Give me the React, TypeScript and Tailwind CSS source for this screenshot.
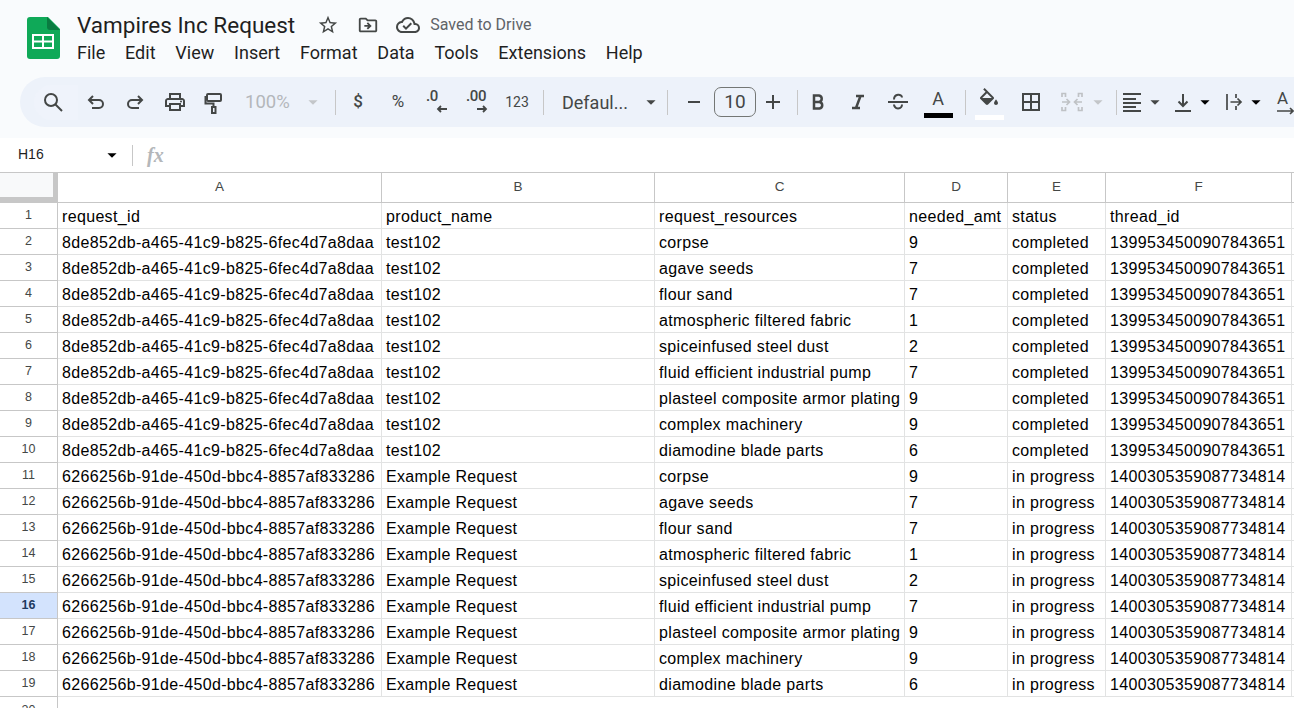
import type { ReactNode } from "react";
import {
  MdOutlinePrint,
  MdBorderAll,
  MdArrowDropDown,
  MdStarBorder,
  MdOutlineDriveFileMove,
  MdOutlineCloudDone,
} from "react-icons/md";

const columns = ["A", "B", "C", "D", "E", "F"];

const resources: [string, string][] = [
  ["corpse", "9"],
  ["agave seeds", "7"],
  ["flour sand", "7"],
  ["atmospheric filtered fabric", "1"],
  ["spiceinfused steel dust", "2"],
  ["fluid efficient industrial pump", "7"],
  ["plasteel composite armor plating", "9"],
  ["complex machinery", "9"],
  ["diamodine blade parts", "6"],
];

const rows: string[][] = [
  ["request_id", "product_name", "request_resources", "needed_amt", "status", "thread_id"],
  ...resources.map(([name, amt]) => [
    "8de852db-a465-41c9-b825-6fec4d7a8daa",
    "test102",
    name,
    amt,
    "completed",
    "1399534500907843651",
  ]),
  ...resources.map(([name, amt]) => [
    "6266256b-91de-450d-bbc4-8857af833286",
    "Example Request",
    name,
    amt,
    "in progress",
    "1400305359087734814",
  ]),
];

const Divider = ({ className }: { className: string }) => (
  <div className={`h-[25px] w-px shrink-0 bg-[#c7c7c7] ${className}`} />
);

const Drop = ({ className = "text-[#444746]" }: { className?: string }) => (
  <MdArrowDropDown className={`size-[22px] shrink-0 ${className}`} />
);

const Btn = ({ className = "w-[40px]", children }: { className?: string; children: ReactNode }) => (
  <div className={`flex h-[28px] shrink-0 items-center justify-center text-[#444746] ${className}`}>{children}</div>
);

// stroked 24px toolbar glyph
const Glyph = ({ children, stroke = "#444746", sw = 2 }: { children: ReactNode; stroke?: string; sw?: number }) => (
  <svg width="24" height="24" viewBox="0 0 24 24" fill="none" stroke={stroke} strokeWidth={sw} className="shrink-0">
    {children}
  </svg>
);

const SheetsLogo = () => (
  <svg width="33" height="42" viewBox="0 0 33 42" className="shrink-0">
    <path d="M3 0h18l12 12v27a3 3 0 0 1-3 3H3a3 3 0 0 1-3-3V3a3 3 0 0 1 3-3z" fill="#0fa958" />
    <path d="M20 0l13 13h-10a3 3 0 0 1-3-3z" fill="#0a7c41" />
    <path d="M5 17h22v15H5z" fill="#fff" />
    <path d="M7 19h8v4.500H7zM17 19h8v4.500h-8zM7 25.500h8V30H7zM17 25.500h8V30h-8z" fill="#0fa958" />
  </svg>
);

const DecimalIcon = ({ label, dir }: { label: string; dir: "left" | "right" }) => (
  <div className={dir === "left" ? "relative flex h-[30px] w-[40px] shrink-0 justify-center pr-[8px] text-[#444746]" : "relative flex h-[30px] w-[40px] shrink-0 justify-center text-[#444746]"}>
    <span className="font-['Roboto',sans-serif] text-[15px] leading-[18px] font-medium tracking-tight">{label}</span>
    <svg width="12" height="10" viewBox="0 0 12 10" className="absolute top-[17px] left-[20px]">
      {dir === "left" ? (
        <path d="M11 5H2M5 2 2 5l3 3" fill="none" stroke="currentColor" strokeWidth="1.800" />
      ) : (
        <path d="M1 5h9M7 2l3 3-3 3" fill="none" stroke="currentColor" strokeWidth="1.800" />
      )}
    </svg>
  </div>
);

export default function App() {
  return (
    <div className="flex h-[708px] w-[1294px] flex-col overflow-hidden bg-[#f9fbfd] font-['Liberation_Sans',Arial,sans-serif] text-black">
      {/* title + menus */}
      <header className="flex h-[77px] shrink-0 items-start pt-[17px] pl-[27px]">
        <SheetsLogo />
        <div className="-mt-[7px] ml-[17px] flex flex-col font-['Roboto',sans-serif]">
          <div className="flex h-[30px] items-center">
            <span className="text-[22.500px] leading-[30px] text-[#1f1f1f]">Vampires Inc Request</span>
            <MdStarBorder className="ml-[22px] size-[22px] text-[#444746]" />
            <MdOutlineDriveFileMove className="ml-[18px] size-[22px] text-[#444746]" />
            <MdOutlineCloudDone className="ml-[17px] size-[24px] text-[#444746]" />
            <span className="ml-[10px] text-[16px] text-[#5f6368]">Saved to Drive</span>
          </div>
          <nav className="mt-[1px] flex gap-[19.800px] text-[18px] leading-[24px] text-[#1f1f1f]">
            <span>File</span>
            <span>Edit</span>
            <span>View</span>
            <span>Insert</span>
            <span>Format</span>
            <span>Data</span>
            <span>Tools</span>
            <span>Extensions</span>
            <span>Help</span>
          </nav>
        </div>
      </header>

      {/* toolbar */}
      <div className="ml-[20px] flex h-[50px] w-[1300px] shrink-0 items-center rounded-l-[25px] bg-[#edf2fa] pl-[14px]">
        <div className="flex h-[35px] w-[44px] shrink-0 items-center justify-center rounded-l-[17px] bg-[#eff3fb] pr-[7px]">
          <Glyph>
            <circle cx="10" cy="10" r="6" />
            <path d="M14.500 14.500 21 21" />
          </Glyph>
        </div>
        <Btn className="w-[36px]">
          <Glyph>
            <path d="M5 10h10a4 4 0 0 1 0 8H8M9 6l-4 4 4 4" />
          </Glyph>
        </Btn>
        <Btn className="w-[42px]">
          <Glyph>
            <path d="M19 10H9a4 4 0 0 0 0 8h7M15 6l4 4-4 4" />
          </Glyph>
        </Btn>
        <Btn className="w-[37px]"><MdOutlinePrint className="size-[24px]" /></Btn>
        <Btn className="w-[41px]">
          <Glyph>
            <rect x="5" y="4" width="14" height="7" rx="1" />
            <path d="M5 7H3.500v6.500H11.500V17" />
            <rect x="10" y="17" width="3.500" height="6" />
          </Glyph>
        </Btn>
        <span className="ml-[11px] w-[57px] shrink-0 pt-[1px] font-['Roboto',sans-serif] text-[18.500px] text-[#b4b7ba]">100%</span>
        <Drop className="text-[#c3c6c9]" />
        <Divider className="ml-[11px]" />
        <Btn className="w-[44px]"><span className="font-['Roboto',sans-serif] text-[17px] font-medium">$</span></Btn>
        <Btn className="w-[36px]"><span className="font-['Roboto',sans-serif] text-[17px]">%</span></Btn>
        <DecimalIcon label=".0" dir="left" />
        <DecimalIcon label=".00" dir="right" />
        <Btn className="w-[42px]"><span className="font-['Roboto',sans-serif] text-[14px]">123</span></Btn>
        <Divider className="ml-[5px]" />
        <span className="ml-[18px] w-[78px] shrink-0 font-['Roboto',sans-serif] text-[18px] text-[#444746]">Defaul...</span>
        <Drop />
        <Divider className="ml-[5px]" />
        <Btn className="w-[46px] pl-[6px]">
          <Glyph><path d="M6 12h12" /></Glyph>
        </Btn>
        <div className="flex h-[30px] w-[42px] shrink-0 items-center justify-center rounded-[7px] border border-[#747775] font-['Roboto',sans-serif] text-[19px] text-[#444746]">10</div>
        <Btn className="w-[34px]">
          <Glyph><path d="M5 12h14M12 5v14" /></Glyph>
        </Btn>
        <Divider className="ml-[7px]" />
        <Btn>
          <Glyph sw={2.500}>
            <path d="M8 12h5a3.300 3.300 0 0 0 0-6.500H8v13h5.500a3.300 3.300 0 0 0 0-6.500" />
          </Glyph>
        </Btn>
        <Btn>
          <Glyph sw={2.500}>
            <path d="M10 6h8M6 18h8M14.500 6 10 18" />
          </Glyph>
        </Btn>
        <Btn>
          <Glyph>
            <path d="M2 12h20M8 9.500c0-6 8-6 8-2M8 14.500c0 1 1 4 4 4s4-2.500 4-4" />
          </Glyph>
        </Btn>
        <div className="relative flex h-[34px] w-[40px] shrink-0 justify-center pt-[2px] text-[#444746]">
          <span className="font-['Roboto',sans-serif] text-[18px] leading-[24px]">A</span>
          <div className="absolute bottom-[1px] left-[6px] h-[5px] w-[29px] bg-black" />
        </div>
        <Divider className="ml-[7px]" />
        <div className="relative h-[40px] w-[44px] shrink-0 pt-[6px] pl-[11px] text-[#444746]">
          <svg width="24" height="24" viewBox="0 0 24 24" fill="currentColor">
            <path d="M16.560 8.940 7.620 0 6.210 1.410l2.380 2.380-5.150 5.150c-.59.59-.59 1.540 0 2.120l5.500 5.500c.29.29.68.44 1.060.44s.77-.15 1.060-.44l5.500-5.500c.59-.58.59-1.530 0-2.120zM5.210 10 10 5.210 14.790 10H5.210zM19 11.500s-2 2.170-2 3.500c0 1.100.9 2 2 2s2-.9 2-2c0-1.330-2-3.500-2-3.500z" />
          </svg>
          <div className="absolute top-[33px] left-[9px] h-[5px] w-[29px] bg-white" />
        </div>
        <Btn className="w-[42px]"><MdBorderAll className="size-[24px]" /></Btn>
        <Btn>
          <Glyph stroke="#bfc2c5" sw={1.700}>
            <path d="M5.500 7V3.500H2V7M18.500 7V3.500H22V7M5.500 17v3.500H2V17M18.500 17v3.500H22V17" />
            <path d="M2 12h7M6.500 9l3 3-3 3M22 12h-7M17.500 9l-3 3 3 3" />
          </Glyph>
        </Btn>
        <Drop className="-ml-[5px] text-[#c3c6c9]" />
        <Divider className="ml-[7px]" />
        <div className="ml-[3px] flex h-[28px] shrink-0 items-center">
          <Glyph>
            <path d="M3 4h18M3 9h13M3 13h18M3 17h13M3 21h18" />
          </Glyph>
          <Drop />
        </div>
        <div className="ml-[5px] flex h-[28px] shrink-0 items-center">
          <Glyph>
            <path d="M12 4v12M7.500 11.500 12 16l4.500-4.500M4 21h16" />
          </Glyph>
          <Drop className="-ml-[1px]" />
        </div>
        <div className="ml-[8px] flex h-[28px] shrink-0 items-center">
          <svg width="20" height="20" viewBox="0 0 20 20" fill="none" stroke="#444746" strokeWidth="1.700" className="shrink-0">
            <path d="M3 2v16M12 2v4M12 14v4M6.500 10H17M13.500 6.500 17 10l-3.500 3.500" />
          </svg>
          <Drop className="ml-[1px]" />
        </div>
        <div className="relative ml-[10px] h-[28px] w-[20px] shrink-0 text-[#444746]">
          <span className="absolute top-[1px] left-0 font-['Roboto',sans-serif] text-[17px] leading-[18px]">A</span>
          <svg width="17" height="8" viewBox="0 0 17 8" className="absolute top-[19px] left-0">
            <path d="M0 4h15.500M13 1l3 3-3 3" fill="none" stroke="currentColor" strokeWidth="1.600" />
          </svg>
        </div>
      </div>

      {/* formula bar */}
      <div className="mt-[11px] flex h-[35px] shrink-0 items-center border-b border-[#c7c7c7] bg-white">
        <span className="-mt-[2px] ml-[18px] w-[86px] text-[14px] text-[#1f1f1f]">H16</span>
        <Drop className="-ml-[3px]" />
        <div className="ml-[9px] h-[21px] w-px bg-[#c7c7c7]" />
        <span className="ml-[14px] font-['Liberation_Serif',serif] text-[20px] font-bold text-[#b4b7ba] italic">fx</span>
      </div>

      {/* grid */}
      <div className="grid grid-cols-[58px_324px_273px_250px_103px_98px_186px_1fr] bg-white">
        <div className="relative h-[30px] border-r border-b border-[#c7c7c7] bg-[#f8f9fa]">
          <div className="absolute right-0 bottom-0 h-[5px] w-full bg-[#c7c7c7]" />
          <div className="absolute right-0 bottom-0 h-full w-[4px] bg-[#c7c7c7]" />
        </div>
        {columns.map((c) => (
          <div key={c} className="flex h-[30px] items-center justify-center border-r border-b border-[#c7c7c7] text-[13.500px] text-[#444746]">
            {c}
          </div>
        ))}
        <div className="h-[30px] border-b border-[#c7c7c7]" />
        {rows.map((row, i) => (
          <Row key={i} n={i + 1} cells={row} />
        ))}
        <div className="flex h-[26px] justify-center border-r border-[#c7c7c7] pt-[4px] text-[12.500px] text-[#444746]">20</div>
        <div className="col-span-7 h-[26px]" />
      </div>
    </div>
  );
}

function Row({ n, cells }: { n: number; cells: string[] }) {
  const selected = n === 16;
  return (
    <>
      <div
        className={
          selected
            ? "flex h-[26px] justify-center border-r border-b border-[#c7c7c7] bg-[#d3e3fd] pt-[3px] text-[12.500px] font-bold text-[#1f3a5f]"
            : "flex h-[26px] justify-center border-r border-b border-[#c7c7c7] pt-[3px] text-[12.500px] text-[#444746]"
        }
      >
        {n}
      </div>
      {cells.map((text, i) => (
        <div key={i} className="flex h-[26px] items-center overflow-hidden border-r border-b border-[#e2e3e3] pt-[2px] pl-[4px] text-[16px] tracking-[0.34px] whitespace-nowrap">
          {text}
        </div>
      ))}
      <div className="h-[26px] border-b border-[#e2e3e3]" />
    </>
  );
}
